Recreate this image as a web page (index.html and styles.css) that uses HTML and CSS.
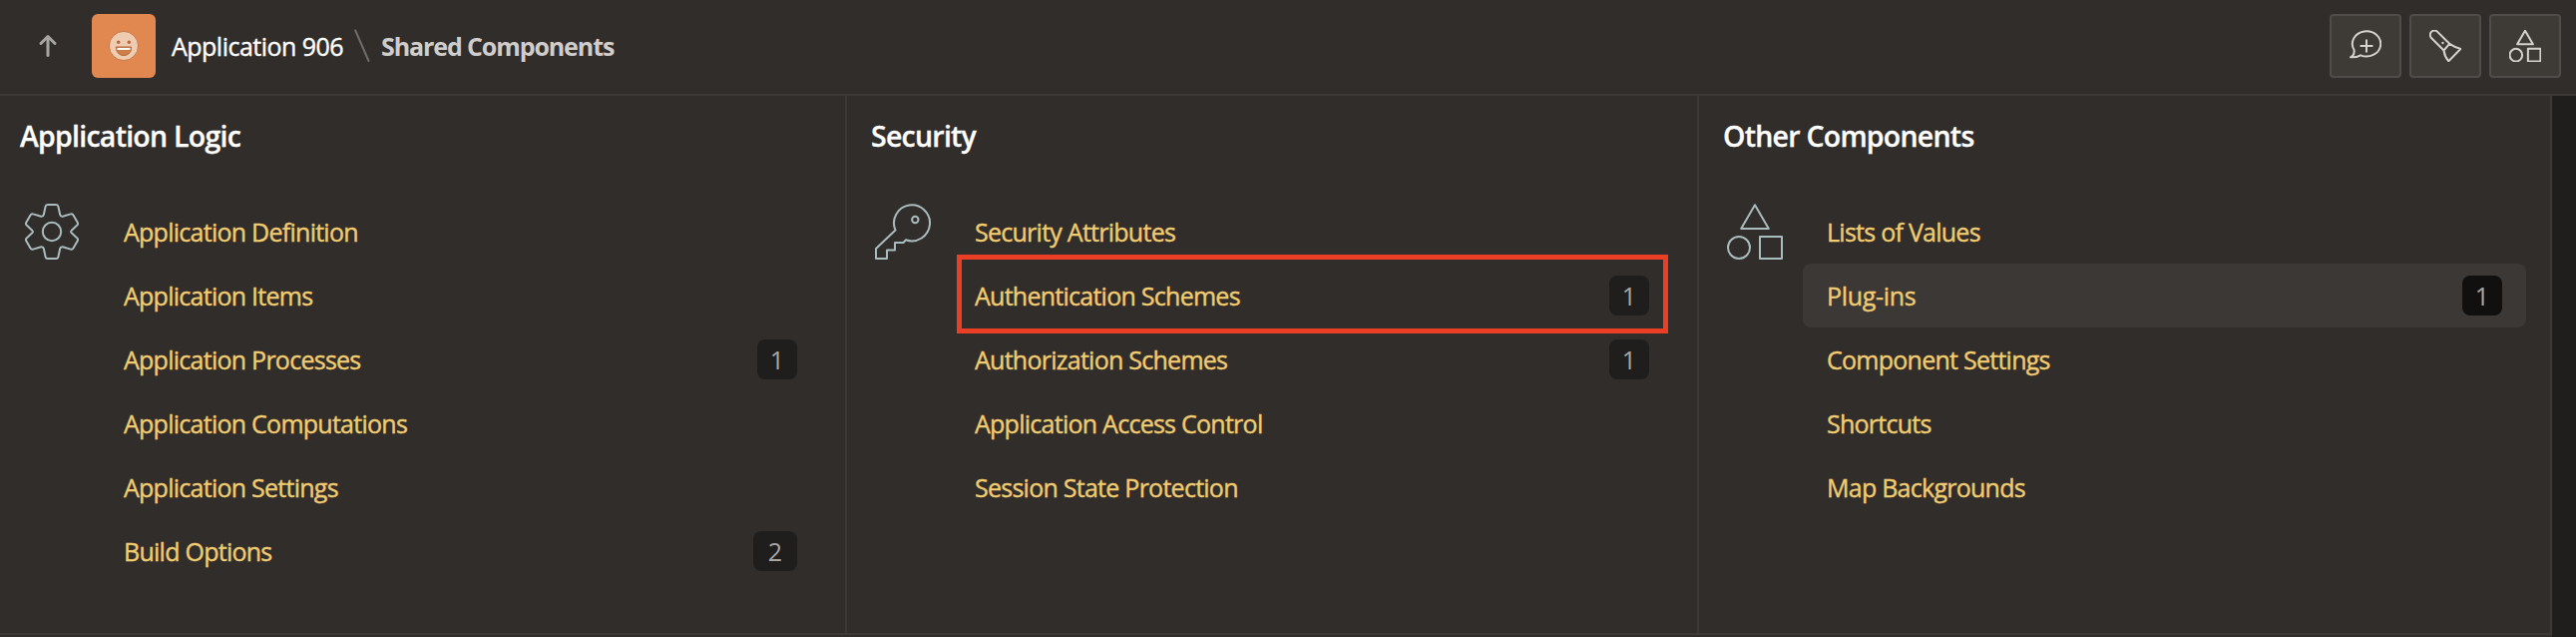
FILE: index.html
```html
<!DOCTYPE html>
<html lang="en">
<head>
<meta charset="utf-8">
<title>Shared Components</title>
<link rel="stylesheet" href="styles.css">
</head>
<body>
<svg class="defs" aria-hidden="true">
  <symbol id="shapes" viewBox="0 0 56 56">
    <path d="M28 1.2 41.8 25H14.2Z"/>
    <circle cx="12" cy="44" r="11"/>
    <rect x="33" y="33" width="22" height="22"/>
  </symbol>
</svg>
<header class="topbar">
  <svg class="up" viewBox="0 0 20 24"><path d="M10 21.5V2.5M3 9.5l7-7 7 7"/></svg>
  <span class="tile">
    <svg viewBox="0 0 32 32">
      <circle class="face" cx="16" cy="16" r="14.6"/>
      <circle class="eye" cx="10.7" cy="12.3" r="1.7"/><circle class="eye" cx="21.3" cy="12.3" r="1.7"/>
      <path class="mouth" d="M8.5 17h15v1.6a7.5 7 0 0 1-15 0z"/>
      <path class="teeth" d="M9.5 18h13v2h-13z"/>
    </svg>
  </span>
  <a class="crumb">Application 906</a>
  <svg class="slash" viewBox="0 0 16 34"><path d="M1.2 1.5 14.5 32"/></svg>
  <h1 class="current">Shared Components</h1>
  <div class="actions">
    <button class="action"><svg viewBox="0 0 32 32"><path d="M4.5 19.8A14.2 12.6 0 1 1 11 25.3Q7 27.7 1 27.3 5.4 25 4.5 19.8ZM17 10.3v11.4M11.3 16h11.4"/></svg></button>
    <button class="action"><svg viewBox="0 0 32 32"><path d="M20.2 13.8 8.2 1.9A4.3 4.3 0 0 0 2 8L14.5 20.5ZM20.2 13.8Q25 17 31.4 18.9L19.3 31.3Q15.3 26.5 14.5 20.5Z"/><circle class="dot" cx="13.5" cy="13" r="1.2"/></svg></button>
    <button class="action"><svg viewBox="0 0 56 56" class="bold"><use href="#shapes"/></svg></button>
  </div>
</header>
<main class="columns">
  <section class="column">
    <h2>Application Logic</h2>
    <div class="body">
      <svg class="icon" viewBox="0 0 56 56"><path d="M23.8 1h8.4q1.8 0 2.2 1.8l1.6 7.5q.6 3 3.6 2.2l7.2-2.1q1.8-.6 2.7 1l4.2 7.3q.9 1.6-.4 2.9l-5.3 4.8q-1.8 1.6 0 3.2l5.3 4.8q1.3 1.3.4 2.9l-4.2 7.3q-.9 1.6-2.7 1l-7.2-2.1q-3-.8-3.6 2.2l-1.6 7.5q-.4 1.8-2.2 1.8h-8.4q-1.8 0-2.2-1.8L20 45.7q-.6-3-3.6-2.2l-7.2 2.1q-1.8.6-2.7-1l-4.2-7.3q-.9-1.6.4-2.9L8 29.6q1.8-1.6 0-3.2l-5.3-4.8q-1.3-1.3-.4-2.9l4.2-7.3q.9-1.6 2.7-1l7.2 2.1q3 .8 3.6-2.2l1.6-7.5Q22 1 23.8 1Z"/><circle cx="28" cy="28" r="9.2"/></svg>
      <ul>
        <li><a>Application Definition</a></li>
        <li><a>Application Items</a></li>
        <li><a>Application Processes</a><span class="badge">1</span></li>
        <li><a>Application Computations</a></li>
        <li><a>Application Settings</a></li>
        <li><a>Build Options</a><span class="badge wide">2</span></li>
      </ul>
    </div>
  </section>
  <section class="column">
    <h2>Security</h2>
    <div class="body">
      <svg class="icon" viewBox="0 0 56 56"><path d="M20.5 26.5A18 18 0 1 1 31 36.3L28.5 39H20V46.5H12V55H1V45Z"/><circle cx="40.3" cy="16" r="3.2"/></svg>
      <ul>
        <li><a>Security Attributes</a></li>
        <li class="marked"><a>Authentication Schemes</a><span class="badge">1</span></li>
        <li><a>Authorization Schemes</a><span class="badge">1</span></li>
        <li><a>Application Access Control</a></li>
        <li><a>Session State Protection</a></li>
      </ul>
    </div>
  </section>
  <section class="column">
    <h2>Other Components</h2>
    <div class="body">
      <svg class="icon" viewBox="0 0 56 56"><use href="#shapes"/></svg>
      <ul>
        <li><a>Lists of Values</a></li>
        <li class="hover"><a>Plug-ins</a><span class="badge">1</span></li>
        <li><a>Component Settings</a></li>
        <li><a>Shortcuts</a></li>
        <li><a>Map Backgrounds</a></li>
      </ul>
    </div>
  </section>
</main>
</body>
</html>
```
FILE: styles.css
```css
* { box-sizing: border-box; }
body {
  margin: 0;
  height: 638px;
  overflow: hidden;
  background: #312d2a;
  color: #fff;
  font-family: "Open Sans", "Noto Sans", sans-serif;
  font-size: 25px;
}
.defs { position: absolute; width: 0; height: 0; }
svg { fill: none; stroke-linejoin: round; stroke-linecap: round; flex: none; }
.topbar {
  display: flex;
  align-items: center;
  height: 96px;
  padding: 0 15px 2px 38px;
  border-bottom: 2px solid #3e3936;
}
.up { width: 20px; height: 24px; stroke: #a8a6a4; stroke-width: 3; }
.tile {
  display: flex;
  align-items: center;
  justify-content: center;
  width: 64px;
  height: 64px;
  margin: 0 16px 0 34px;
  border-radius: 6px;
  background: #e0884f;
}
.tile svg { width: 32px; height: 32px; }
.face { fill: #eecbb1; stroke: #c97845; stroke-width: 1; }
.eye { fill: #b5683a; }
.mouth { fill: #cf7e49; stroke: #b5683a; stroke-width: 1; }
.teeth { fill: #fff; }
.crumb {
  width: 171px;
  letter-spacing: -0.52px;
  white-space: nowrap;
  -webkit-text-stroke: 0.4px currentColor;
}
.slash { width: 16px; height: 34px; margin: 0 11px 0 12px; stroke: #6f6c69; stroke-width: 2; }
.current {
  margin: 0;
  font-size: 25px;
  font-weight: 700;
  letter-spacing: -1.1px;
  color: #d0cecc;
  white-space: nowrap;
}
.actions { display: flex; gap: 8px; margin-left: auto; }
.action {
  display: flex;
  align-items: center;
  justify-content: center;
  width: 72px;
  height: 64px;
  padding: 0;
  border: 2px solid #504c48;
  border-radius: 4px;
  background: #3e3a35;
}
.action svg { width: 32px; height: 32px; stroke: #d5d3d0; stroke-width: 2; }
.action .bold { stroke-width: 3.5; }
.action .dot { fill: #d5d3d0; stroke: none; }
.columns {
  display: grid;
  grid-template-columns: 849px 854px 855px 24px;
  height: 542px;
  background: linear-gradient(90deg, #312d2a 2558px, #201e1c 2558px);
}
.column {
  height: 540px;
  padding: 20px 24px 0;
  border-right: 2px solid #3e3936;
  border-bottom: 2px solid #3e3936;
}
.column:first-child { padding-left: 20px; }
h2 {
  margin: -2px 0 2px;
  height: 44px;
  font-size: 28.5px;
  line-height: 44px;
  font-weight: 600;
  letter-spacing: -0.75px;
  -webkit-text-stroke: 0.3px currentColor;
}
.body { display: flex; align-items: flex-start; gap: 20px; padding-top: 40px; }
.icon { width: 56px; height: 56px; margin: 4px 0 0 4px; stroke: #a9bdbf; stroke-width: 2; }
ul { flex: 1; margin: 0; padding: 0; list-style: none; }
li {
  display: flex;
  position: relative;
  align-items: center;
  justify-content: space-between;
  height: 64px;
  padding: 0 24px;
  border-radius: 8px;
  color: #f1cc71;
}
li a { letter-spacing: -0.74px; -webkit-text-stroke: 0.4px currentColor; }
.hover { background: #3c3835; }
.hover a { letter-spacing: -0.3px; }
.badge {
  width: 40px;
  height: 40px;
  border-radius: 8px;
  background: #201e1c;
  color: #a8a6a4;
  line-height: 40px;
  text-align: center;
}
.wide { width: 44px; }
.hover .badge { background: #11100f; }
.marked::after {
  content: "";
  position: absolute;
  inset: -9px 5px -6px 6px;
  border: 5px solid #ea3f25;
}
```
